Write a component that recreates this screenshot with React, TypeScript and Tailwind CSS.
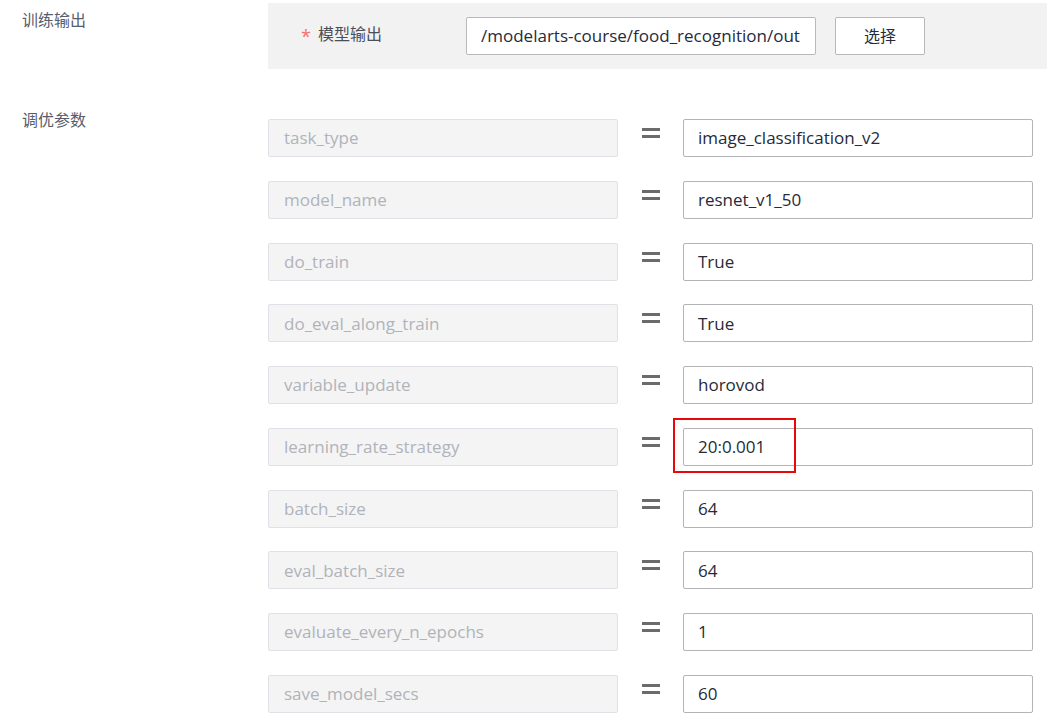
import React from "react";

const params: [string, string, boolean?][] = [
  ["task_type", "image_classification_v2"],
  ["model_name", "resnet_v1_50"],
  ["do_train", "True"],
  ["do_eval_along_train", "True"],
  ["variable_update", "horovod"],
  ["learning_rate_strategy", "20:0.001", true],
  ["batch_size", "64"],
  ["eval_batch_size", "64"],
  ["evaluate_every_n_epochs", "1"],
  ["save_model_secs", "60"],
];

const font = { fontFamily: '"Open Sans", "Noto Sans CJK SC", sans-serif' };

function Eq() {
  return (
    <div className="w-[65px] h-[38px] flex justify-center pt-[8px] shrink-0">
      <div className="flex flex-col gap-[4px] w-[18px] mt-[1px]">
        <div className="h-[3px] bg-[#6b6b6b]" />
        <div className="h-[3px] bg-[#6b6b6b]" />
      </div>
    </div>
  );
}

export default function App() {
  return (
    <div className="w-[1047px] h-[725px] bg-white overflow-hidden relative" style={font}>
      <div className="flex pt-[3px]">
        <div className="w-[268px] shrink-0 pl-[22px] pt-[5px] text-[16px] text-[#575d6c] leading-[24px]">训练输出</div>
        <div className="flex-1 h-[66px] bg-[#f2f2f2] flex items-center">
          <div className="w-[198px] shrink-0 flex items-center pl-[33px] text-[16px] text-[#4a4f5a] leading-[24px] mt-[-4px] self-start pt-[21px]">
            <span className="text-[#f66f6a] mr-[7px] text-[18px] leading-[24px] mt-[4px]">*</span>
            模型输出
          </div>
          <div className="w-[350px] h-[38px] bg-white border border-[#b8b8bd] rounded-[2px] flex items-center pl-[14px] pr-[15px] text-[17px] text-[#252b3a]">
            <div className="flex-1 overflow-hidden whitespace-nowrap">/modelarts-course/food_recognition/output</div>
          </div>
          <div className="ml-[19px] w-[90px] h-[38px] bg-white border border-[#b8b8bd] rounded-[2px] flex items-center justify-center text-[16px] text-[#252b3a]">
            选择
          </div>
        </div>
      </div>

      <div className="flex mt-[50px]">
        <div className="w-[268px] shrink-0 pl-[22px] mt-[-11px] text-[16px] text-[#575d6c] leading-[24px]">调优参数</div>
        <div className="flex flex-col gap-[23.78px]">
          {params.map(([k, v, hl]) => (
            <div key={k} className="flex items-start h-[38px]">
              <div className="w-[350px] h-[38px] bg-[#f4f4f4] border border-[#dfe1e6] rounded-[2px] flex items-center pl-[15px] text-[17px] text-[#b0b3ba] whitespace-nowrap">
                {k}
              </div>
              <Eq />
              <div className="relative w-[350px] h-[38px] bg-white border border-[#b3b3b8] rounded-[2px] flex items-center pl-[14px] text-[17px] text-[#252b3a] whitespace-nowrap">
                {v}
                {hl && (
                  <div className="absolute left-[-11px] top-[-11px] w-[123px] h-[55px] border-2 border-[#e8080c]" />
                )}
              </div>
            </div>
          ))}
        </div>
      </div>
    </div>
  );
}
